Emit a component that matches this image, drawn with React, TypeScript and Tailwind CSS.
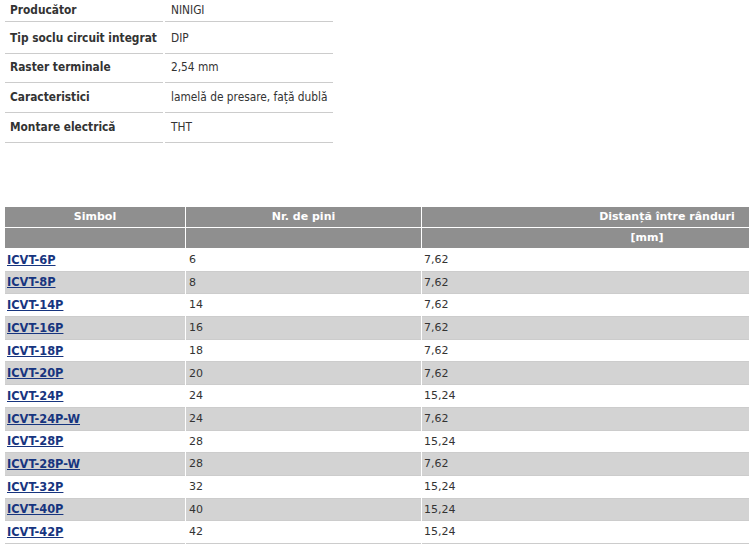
import React from "react";

const specs: { label: string; value: string; h: string }[] = [
    { label: "Producător", value: "NINIGI", h: "h-[25px] pb-[3px]" },
    { label: "Tip soclu circuit integrat", value: "DIP", h: "h-[29px]" },
    { label: "Raster terminale", value: "2,54 mm", h: "h-[29px]" },
    { label: "Caracteristici", value: "lamelă de presare, față dublă", h: "h-[30px]" },
    { label: "Montare electrică", value: "THT", h: "h-[30px]" },
];

const rows: [string, string, string][] = [
    ["ICVT-6P", "6", "7,62"],
    ["ICVT-8P", "8", "7,62"],
    ["ICVT-14P", "14", "7,62"],
    ["ICVT-16P", "16", "7,62"],
    ["ICVT-18P", "18", "7,62"],
    ["ICVT-20P", "20", "7,62"],
    ["ICVT-24P", "24", "15,24"],
    ["ICVT-24P-W", "24", "7,62"],
    ["ICVT-28P", "28", "15,24"],
    ["ICVT-28P-W", "28", "7,62"],
    ["ICVT-32P", "32", "15,24"],
    ["ICVT-40P", "40", "15,24"],
    ["ICVT-42P", "42", "15,24"],
];

export default function App() {
    return (
        <div className="w-[749px] h-[549px] overflow-hidden bg-white text-[#333333]">
            {/* product parameters */}
            <div className="flex flex-col pl-[5px] text-[11.8px] font-['DejaVu_Sans_Condensed','DejaVu_Sans',sans-serif]">
                {specs.map((s) => (
                    <div key={s.label} className={`flex gap-[2px] ${s.h}`}>
                        <div className="w-[158px] flex items-center pl-[5px] font-bold border-b border-[#cccccc] whitespace-nowrap">
                            {s.label}
                        </div>
                        <div className="w-[168px] flex items-center pl-[6px] border-b border-[#cccccc] whitespace-nowrap">
                            {s.value}
                        </div>
                    </div>
                ))}
            </div>

            {/* variants table */}
            <div className="mt-[64px] pl-[5px] flex flex-col text-[11px] font-['DejaVu_Sans',sans-serif]">
                <div className="flex flex-col gap-[1px] pb-[1px] text-white font-bold">
                    <div className="flex gap-[1px] h-[20px]">
                        <div className="w-[180px] bg-[#8f8f8f] flex items-center justify-center">Simbol</div>
                        <div className="w-[235px] bg-[#8f8f8f] flex items-center justify-center">Nr. de pini</div>
                        <div className="flex-1 min-w-0 bg-[#8f8f8f] overflow-hidden flex items-center">
                            <div className="w-[490px] shrink-0 text-center whitespace-nowrap">Distanță între rânduri</div>
                        </div>
                    </div>
                    <div className="flex gap-[1px] h-[20px]">
                        <div className="w-[180px] bg-[#8f8f8f]" />
                        <div className="w-[235px] bg-[#8f8f8f]" />
                        <div className="flex-1 min-w-0 bg-[#8f8f8f] overflow-hidden flex items-center">
                            <div className="w-[450px] shrink-0 text-center">[mm]</div>
                        </div>
                    </div>
                </div>
                {rows.map(([sym, pins, dist], i) => {
                    const bg = i % 2 === 1 ? "bg-[#d3d3d3]" : "bg-white";
                    return (
                        <div key={sym} className="flex gap-[1px] h-[22.7px]">
                            <div className={`w-[180px] ${bg} border-b border-[#cccccc] flex items-center pl-[2px] pt-[1px]`}>
                                <a href="#" className="font-bold text-[11.4px] text-[#17357f] underline">
                                    {sym}
                                </a>
                            </div>
                            <div className={`w-[235px] ${bg} border-b border-[#cccccc] flex items-center pl-[3px] pt-[1px]`}>{pins}</div>
                            <div className={`flex-1 ${bg} border-b border-[#cccccc] flex items-center pl-[2px] pt-[1px]`}>{dist}</div>
                        </div>
                    );
                })}
            </div>
        </div>
    );
}
